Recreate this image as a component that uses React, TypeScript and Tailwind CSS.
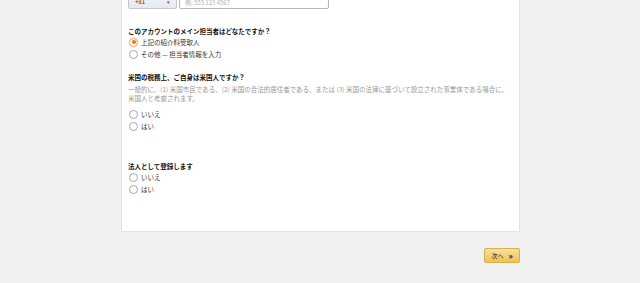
import React from "react";

const font = { fontFamily: '"Noto Sans CJK JP", "Noto Sans", sans-serif' };

function Radio({ label, checked }: { label: string; checked?: boolean }) {
  return (
    <div className="flex h-[12px] items-center">
      <span
        className={
          "ml-[1px] flex h-[9px] w-[9px] items-center justify-center rounded-full border bg-white " +
          (checked ? "border-[#f0a868] shadow-[0_0_2px_#f7c89a]" : "border-[#a6a6a6]")
        }
      >
        {checked && <span className="h-[4px] w-[4px] rounded-full bg-[#e47911]" />}
      </span>
      <span className="ml-[3px] text-[6.5px] leading-[9px] text-[#333]">{label}</span>
    </div>
  );
}

export default function App() {
  return (
    <div className="h-[283px] w-[640px] overflow-hidden bg-[#f1f1f1]" style={font}>
      <div className="ml-[121px] -mt-[16px] w-[399px] border border-[#e3e3e3] bg-white pb-[36px] pl-[6px] pr-[7px]">
        <div className="flex h-[24px] items-end gap-[2px]">
          <div className="flex h-[22px] w-[49px] items-end justify-between rounded-[2px] border border-[#c6c6c6] bg-gradient-to-b from-[#f7f8fa] to-[#e7e9ec] px-[6px] pb-[3px]">
            <span className="text-[6px] leading-[7px] text-[#333]">+81</span>
            <span className="text-[5px] leading-[7px] text-[#555]">▾</span>
          </div>
          <div className="flex h-[23px] w-[150px] items-end rounded-[2px] border border-[#b5b5b5] px-[5px] pb-[2px] shadow-[inset_0_1px_1px_rgba(0,0,0,0.08)]">
            <span className="text-[6px] leading-[7px] text-[#b0b0b0]">例: 555 123 4567</span>
          </div>
        </div>

        <div className="mt-[18px] text-[6.5px] font-bold leading-[9px] text-[#111]">
          このアカウントのメイン担当者はどなたですか？
        </div>
        <div>
          <Radio label="上記の紹介料受取人" checked />
          <Radio label="その他 — 担当者情報を入力" />
        </div>

        <div className="mt-[13px] text-[6.5px] font-bold leading-[9px] text-[#111]">
          米国の税務上、ご自身は米国人ですか？
        </div>
        <div className="mt-[2.5px] text-[6.5px] leading-[9px] text-[#999]">
          一般的に、(1) 米国市民である、(2) 米国の合法的居住者である、または (3) 米国の法律に基づいて設立された事業体である場合に、米国人と考慮されます。
        </div>
        <div className="mt-[5.5px]">
          <Radio label="いいえ" />
          <Radio label="はい" />
        </div>

        <div className="mt-[29.5px] text-[6.5px] font-bold leading-[9px] text-[#111]">
          法人として登録します
        </div>
        <div className="mt-[0.5px]">
          <Radio label="いいえ" />
          <Radio label="はい" />
        </div>
      </div>

      <div className="ml-[121px] mt-[16px] flex w-[399px] justify-end">
        <button className="flex h-[15px] w-[36px] items-center justify-center gap-[5px] rounded-[2px] border border-[#d7b046] bg-gradient-to-b from-[#f7dfa5] to-[#f0c14b] text-[6px] leading-none text-[#111]">
          <span>次へ</span>
          <span className="text-[8px] font-bold leading-none">»</span>
        </button>
      </div>
    </div>
  );
}
